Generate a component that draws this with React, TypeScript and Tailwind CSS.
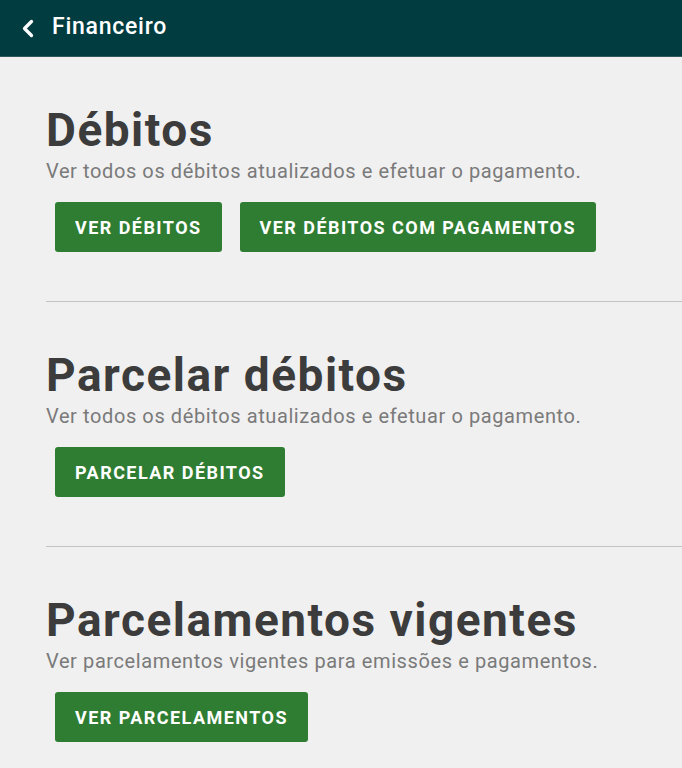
const sections = [
  {
    title: 'Débitos',
    text: 'Ver todos os débitos atualizados e efetuar o pagamento.',
    buttons: ['Ver débitos', 'Ver débitos com pagamentos'],
  },
  {
    title: 'Parcelar débitos',
    text: 'Ver todos os débitos atualizados e efetuar o pagamento.',
    buttons: ['Parcelar débitos'],
  },
  {
    title: 'Parcelamentos vigentes',
    text: 'Ver parcelamentos vigentes para emissões e pagamentos.',
    buttons: ['Ver parcelamentos'],
  },
];

export default function App() {
  return (
    <div className="min-h-screen bg-[#f0f0f0] font-['Roboto',sans-serif]">
      <header className="h-[57px] bg-[#003c40] flex items-center pl-[21px] gap-[17px] border-b border-[#2f5a5c]">
        <svg width="14" height="19" viewBox="0 0 14 19" fill="none">
          <polyline
            points="10.5,2.5 3.5,9.5 10.5,16.5"
            stroke="white"
            strokeWidth="3.3"
            strokeLinecap="round"
            strokeLinejoin="round"
          />
        </svg>
        <h1 className="text-white text-[23px] font-medium tracking-[0.75px] mt-[-1px]">Financeiro</h1>
      </header>

      <main className="pl-[46px]">
        {sections.map((s, i) => (
          <section
            key={s.title}
            className={`pt-[46px] pb-[49px] ${i < sections.length - 1 ? 'border-b border-[#c4c4c4]' : ''}`}
          >
            <h2 className="text-[46px] leading-[54px] font-bold text-[#3c3c3c] tracking-[1.5px]">{s.title}</h2>
            <p className="text-[20px] leading-[24px] text-[#7a7a7a] mt-[2px] tracking-[0.6px]">{s.text}</p>
            <div className="flex gap-[18px] mt-[19px] ml-[9px]">
              {s.buttons.map((b) => (
                <button
                  key={b}
                  className="h-[50px] px-[20px] bg-[#2e7d32] rounded-[3px] text-white text-[18px] font-bold uppercase tracking-[1.45px]"
                >
                  {b}
                </button>
              ))}
            </div>
          </section>
        ))}
      </main>
    </div>
  );
}
